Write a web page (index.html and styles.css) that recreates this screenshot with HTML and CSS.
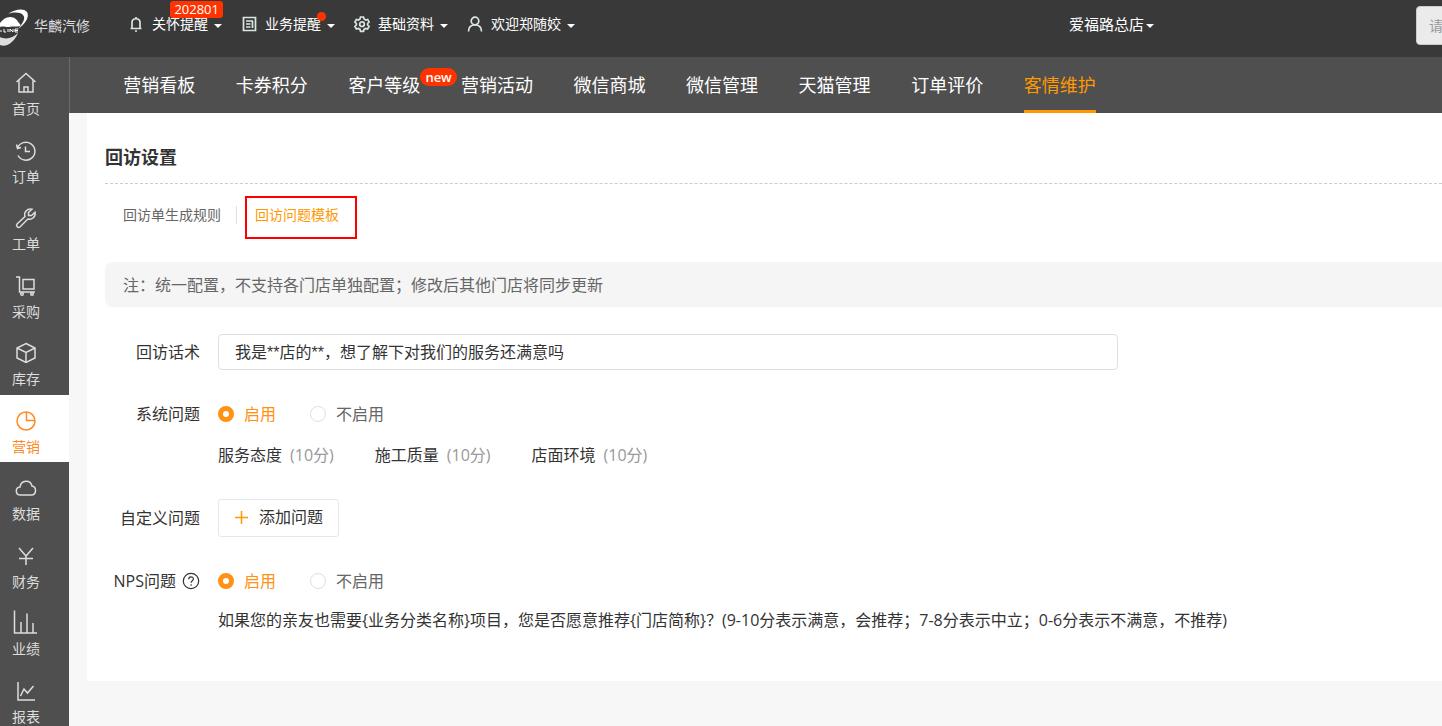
FILE: index.html
```
<!DOCTYPE html>
<html lang="zh-CN">
<head>
<meta charset="utf-8">
<meta name="viewport" content="width=device-width, initial-scale=1">
<title>回访设置</title>
<link rel="stylesheet" href="styles.css">
</head>
<body>
<header class="topbar">
  <a class="brand" href="#">
    <svg class="brand-logo" viewBox="0 0 29 36" aria-hidden="true">
      <path d="M8 6C15 1 24 0 27 4c3 5-2 12-9 17 5-6 8-11 5-14-3-3-9-3-15-1z" fill="#fff"/>
      <path d="M0 15c3-4 6-6 10-6 5 0 7 3 9 6 1 1 2 2 1 3-3 1-7 0-11 1-4 0-6-1-9 0z" fill="#fff"/>
      <path d="M0 23h2M4 21v3h2M8 21v3M10 24v-3l3 3v-3M18 21h-3v3h3M15 22.500h3" fill="none" stroke="#fff" stroke-width="1"/>
      <path d="M0 32c6 3 13 1 18-4-3 8-11 15-18 12z" transform="translate(0 -3)" fill="#ddd"/>
    </svg>
    <span>华麟汽修</span>
  </a>
  <nav class="top-menu" aria-label="快捷菜单">
    <button class="top-item" type="button">
      <svg class="top-icon" viewBox="0 0 16 16"><path d="M4 12V6.500C4 1.500 12 1.500 12 6.500V12M2.500 12.500h11M7 15h2M8 1v2"/></svg>
      <span>关怀提醒</span><i class="caret"></i>
      <b class="count">202801</b>
    </button>
    <button class="top-item" type="button">
      <svg class="top-icon" viewBox="0 0 16 16"><path d="M2.500 1.500h12v13h-12zM5 5h7M5 8h4.500M5 11h4.500M11.500 5v7"/></svg>
      <span>业务提醒</span><i class="caret"></i>
      <b class="dot"></b>
    </button>
    <button class="top-item" type="button">
      <svg class="top-icon" viewBox="0 0 16 16"><path d="M6.500 1h3l.6 2 1.600 1 2-.6 1.400 2.600L13.600 7.500v1.500l1.500 1.500-1.500 2.500-2-.5-1.500.9-.6 1.900h-3L6 13.400l-1.600-.9-2 .5L.9 10.500 2.400 9V7.500L.9 6l1.500-2.600 2 .6L6 3z"/><circle cx="8" cy="8.200" r="2.300"/></svg>
      <span>基础资料</span><i class="caret"></i>
    </button>
    <button class="top-item" type="button">
      <svg class="top-icon" viewBox="0 0 16 16"><circle cx="8" cy="5" r="3.800"/><path d="M1.500 15.500C1.500 11.500 4 9 8 9s6.500 2.500 6.500 6.500"/></svg>
      <span>欢迎郑随姣</span><i class="caret"></i>
    </button>
  </nav>
  <button class="store" type="button"><span>爱福路总店</span><i class="caret"></i></button>
  <div class="search"><input class="search-input" type="text" placeholder="请" aria-label="请"></div>
</header>

<div class="body">
  <nav class="sidebar" aria-label="主菜单">
    <a class="side-item" href="#"><svg class="side-icon" viewBox="0 0 22 22"><path d="M1.500 10 11 1.500 20.500 10M4 8v12h14V8M9 20v-5h4v5"/></svg><span>首页</span></a>
    <a class="side-item" href="#"><svg class="side-icon" viewBox="0 0 22 22"><path d="M2.500 8A9 9 0 1 1 3 15.500M1.500 4.500 2.500 8.500 6 7.500M10.500 6.500v5H15"/></svg><span>订单</span></a>
    <a class="side-item" href="#"><svg class="side-icon" viewBox="0 0 22 22"><path d="M2 17 10 9.500C8.500 5 12.500 1 17 2.200L13.500 5.500v3h3L20 5.200C21 9.500 17 13.500 12.800 12L5 20C3 21.500.5 19 2 17z"/></svg><span>工单</span></a>
    <a class="side-item" href="#"><svg class="side-icon" viewBox="0 0 22 22"><path d="M1 2h3.500v15H20M8 4.500h11V14H8z"/><circle cx="7" cy="19" r="1.300"/><circle cx="17" cy="19" r="1.300"/></svg><span>采购</span></a>
    <a class="side-item" href="#"><svg class="side-icon" viewBox="0 0 22 22"><path d="M11 1.500 20 6v10l-9 4.500L2 16V6zM2 6l9 4.500L20 6M11 10.500v10"/></svg><span>库存</span></a>
    <a class="side-item active" href="#" aria-current="page"><svg class="side-icon" viewBox="0 0 22 22"><circle cx="11" cy="11" r="9"/><path d="M11.500 2v8.500H20"/></svg><span>营销</span></a>
    <a class="side-item" href="#"><svg class="side-icon" viewBox="0 0 22 22"><path d="M5.500 18C0 18 0 10.500 5 10 6 2.500 15.500 2.500 17 9c5 1 4.500 9-.5 9z"/></svg><span>数据</span></a>
    <a class="side-item" href="#"><svg class="side-icon" viewBox="0 0 22 22"><path d="m4 3 7 8 7-8M11 11v9M4 13.500h14"/></svg><span>财务</span></a>
    <a class="side-item" href="#"><svg class="side-icon" viewBox="0 0 22 22"><path d="M-.5-1.500v22.500H22M6 21V10M12 21V1.500M18 21V11"/></svg><span>业绩</span></a>
    <a class="side-item" href="#"><svg class="side-icon" viewBox="0 0 22 22"><path d="M3 2v18h17M5.500 16 9 9l3.500 4L18.500 6"/></svg><span>报表</span></a>
  </nav>

  <div class="content">
    <nav class="subnav" aria-label="营销">
      <div class="subnav-list">
        <a class="subnav-link" href="#">营销看板</a>
        <a class="subnav-link" href="#">卡券积分</a>
        <a class="subnav-link" href="#">客户等级<b class="new-tag">new</b></a>
        <a class="subnav-link" href="#">营销活动</a>
        <a class="subnav-link" href="#">微信商城</a>
        <a class="subnav-link" href="#">微信管理</a>
        <a class="subnav-link" href="#">天猫管理</a>
        <a class="subnav-link" href="#">订单评价</a>
        <a class="subnav-link current" href="#" aria-current="page">客情维护</a>
      </div>
    </nav>

    <main class="panel">
      <h1 class="title">回访设置</h1>
      <div class="tabs">
        <a class="tab" href="#">回访单生成规则</a>
        <span class="divider"></span>
        <a class="tab selected" href="#" aria-current="page">回访问题模板</a>
      </div>
      <p class="note">注：统一配置，不支持各门店单独配置；修改后其他门店将同步更新</p>

      <form class="form">
        <div class="row">
          <label class="label" for="script">回访话术</label>
          <input class="text-input" id="script" type="text" value="我是**店的**，想了解下对我们的服务还满意吗">
        </div>
        <div class="row">
          <span class="label" id="system-label">系统问题</span>
          <div class="field">
            <div class="radios" role="radiogroup" aria-labelledby="system-label">
              <label class="option"><input class="radio" type="radio" name="system" checked><span>启用</span></label>
              <label class="option"><input class="radio" type="radio" name="system"><span>不启用</span></label>
            </div>
            <div class="scores">
              <span class="score">服务态度<span class="points">(10分)</span></span>
              <span class="score">施工质量<span class="points">(10分)</span></span>
              <span class="score">店面环境<span class="points">(10分)</span></span>
            </div>
          </div>
        </div>
        <div class="row">
          <span class="label tall">自定义问题</span>
          <button class="add" type="button">
            <svg class="plus" viewBox="0 0 16 16"><path d="M8 1v14M1 8h14"/></svg>
            <span>添加问题</span>
          </button>
        </div>
        <div class="row">
          <span class="label" id="nps-label">NPS问题
            <svg class="help" viewBox="0 0 18 18"><circle cx="9" cy="9" r="7.700"/><path d="M6.700 7.300c0-3.200 4.700-3.200 4.700-.2 0 1.700-2.300 1.700-2.300 3.700M9.100 12.300v1.500"/></svg>
          </span>
          <div class="field">
            <div class="radios" role="radiogroup" aria-labelledby="nps-label">
              <label class="option"><input class="radio" type="radio" name="nps" checked><span>启用</span></label>
              <label class="option"><input class="radio" type="radio" name="nps"><span>不启用</span></label>
            </div>
            <p class="question">如果您的亲友也需要{业务分类名称}项目，您是否愿意推荐{门店简称}？(9-10分表示满意，会推荐；7-8分表示中立；0-6分表示不满意，不推荐)</p>
          </div>
        </div>
      </form>
    </main>
  </div>
</div>
</body>
</html>
```
FILE: styles.css
```
* {
  box-sizing: border-box;
}

body {
  display: flex;
  flex-direction: column;
  height: 100vh;
  margin: 0;
  overflow: hidden;
  background: #f7f7f7;
  color: #333;
  font: 400 16px/24px "Open Sans", "Noto Sans CJK SC", sans-serif;
}

a {
  color: inherit;
  text-decoration: none;
}

button,
input {
  font: inherit;
}

svg {
  fill: none;
  stroke: currentColor;
  flex: none;
  overflow: visible;
}

/* Top bar */

.topbar {
  display: flex;
  align-items: center;
  flex: none;
  height: 57px;
  padding-bottom: 6px;
  background: #393939;
  color: #fff;
}

.brand {
  display: flex;
  align-items: center;
  gap: 5px;
  width: 128px;
  color: #ddd;
  font-size: 14px;
}

.brand-logo {
  width: 29px;
  height: 36px;
  stroke: none;
}

.top-menu {
  display: flex;
  gap: 19px;
}

.top-item,
.store {
  position: relative;
  display: flex;
  align-items: center;
  padding: 0 0 4px;
  border: 0;
  background: none;
  color: #fff;
  font-size: 14px;
  white-space: nowrap;
}

.top-item {
  gap: 8px;
}

.top-icon {
  width: 16px;
  height: 16px;
  color: #d9e6e2;
  stroke-width: 1.700;
}

.caret {
  border: 4px solid transparent;
  border-top-color: currentColor;
  border-bottom: 0;
  margin: 4px 0 0 -2px;
}

.count {
  position: absolute;
  top: -11px;
  right: -1px;
  padding: 0 4px;
  border-radius: 3px;
  background: #ff3300;
  font-size: 13px;
  font-weight: 400;
  line-height: 17px;
}

.dot {
  position: absolute;
  top: 0;
  right: 9px;
  width: 9px;
  height: 9px;
  border-radius: 50%;
  background: #ff3300;
}

.store {
  gap: 4px;
  margin: 0 262px 0 auto;
  font-size: 15px;
}

.search {
  flex: 0 0 26px;
  overflow: hidden;
}

.search-input {
  display: block;
  width: 240px;
  height: 39px;
  padding: 0 12px;
  border: 1px solid #ccc;
  border-radius: 4px;
  background: #ebebeb;
  font-size: 14px;
}

.search-input::placeholder {
  color: #999;
}

/* Sidebar */

.body {
  display: flex;
  flex: 1;
  min-height: 0;
}

.sidebar {
  display: grid;
  grid-auto-rows: 1fr;
  flex: 0 0 69px;
  height: 675px;
  background: #4f4f4f;
}

.side-item {
  display: flex;
  flex-direction: column;
  align-items: center;
  gap: 3px;
  padding: 15px 17px 0 0;
  color: #ddd;
  font-size: 14px;
}

.side-icon {
  width: 22px;
  height: 22px;
  stroke-width: 1.500;
}

.side-item.active {
  background: #fff;
  color: #ff8a1f;
}

/* Section navigation */

.content {
  flex: 1;
  min-width: 0;
}

.subnav {
  height: 56px;
  padding-left: 33px;
  border-left: 1px solid #6a6a6a;
  background: #4f4f4f;
  color: #fff;
}

.subnav-list {
  display: grid;
  grid-template-columns: repeat(9, 1fr);
  justify-items: center;
  width: 1013px;
  height: 100%;
}

.subnav-link {
  position: relative;
  border-bottom: 3px solid transparent;
  font-size: 18px;
  line-height: 56px;
  white-space: nowrap;
  height: 56px;
}

.subnav-link.current {
  border-color: #ff9900;
  color: #ff9900;
}

.new-tag {
  position: absolute;
  top: 11px;
  left: 100%;
  padding: 0 5px;
  border-radius: 9px;
  background: #ff3300;
  color: #fff;
  font-size: 13px;
  font-weight: 600;
  line-height: 18px;
}

/* Settings panel */

.panel {
  margin-left: 18px;
  padding: 32px 0 49px 18px;
  background: #fff;
}

.title {
  margin: 0;
  padding-bottom: 14px;
  border-bottom: 1px dashed #ccc;
  font-size: 18px;
  font-weight: 700;
}

.tabs {
  display: flex;
  align-items: center;
  margin-top: 12px;
  padding-left: 18px;
  color: #666;
  font-size: 14px;
}

.tab {
  padding-bottom: 5px;
  line-height: 34px;
}

.divider {
  width: 1px;
  height: 18px;
  margin: 0 8px 5px 15px;
  background: #dcdfe6;
}

.tab.selected {
  padding: 0 16px 5px 8px;
  border: 2px solid #f00;
  color: #ff9900;
}

.note {
  margin: 23px 0 27px;
  padding: 11px 18px 10px;
  border-radius: 8px 0 0 8px;
  background: #f5f5f5;
  color: #666;
}

.form {
  display: grid;
  gap: 32px;
}

.row {
  display: flex;
  gap: 18px;
}

.label {
  display: flex;
  align-items: center;
  justify-content: flex-end;
  gap: 6px;
  flex: 0 0 95px;
  height: 24px;
  white-space: nowrap;
}

label.label {
  height: 36px;
}

.label.tall {
  height: 38px;
}

.text-input {
  flex: 0 1 900px;
  min-width: 0;
  height: 36px;
  padding: 0 16px 2px;
  border: 1px solid #dcdfe6;
  border-radius: 4px;
  background: #fff;
  color: #333;
  font-family: "Liberation Sans", "Noto Sans CJK SC", sans-serif;
}

.field {
  flex: 1;
  min-width: 0;
}

.radios {
  display: flex;
  gap: 34px;
}

.option {
  display: flex;
  align-items: center;
  gap: 10px;
  color: #666;
}

.option:has(:checked) {
  color: #ff9114;
}

.radio {
  appearance: none;
  width: 16px;
  height: 16px;
  margin: 0;
  border: 1px solid #dcdfe6;
  border-radius: 50%;
  background: #fff;
}

.radio:checked {
  border: 5px solid #ff9114;
}

.scores {
  display: flex;
  gap: 41px;
  margin-top: 17px;
}

.score {
  display: flex;
  gap: 8px;
}

.points {
  color: #999;
}

.add {
  display: flex;
  align-items: center;
  gap: 10px;
  height: 38px;
  padding: 0 15px 2px;
  border: 1px solid #e4e7ed;
  border-radius: 3px;
  background: #fff;
  color: #333;
}

.plus {
  width: 15px;
  height: 15px;
  color: #ff9900;
  stroke-width: 1.600;
}

.help {
  width: 18px;
  height: 18px;
  stroke-width: 1.200;
}

.question {
  margin: 15px 0 0;
}
```
